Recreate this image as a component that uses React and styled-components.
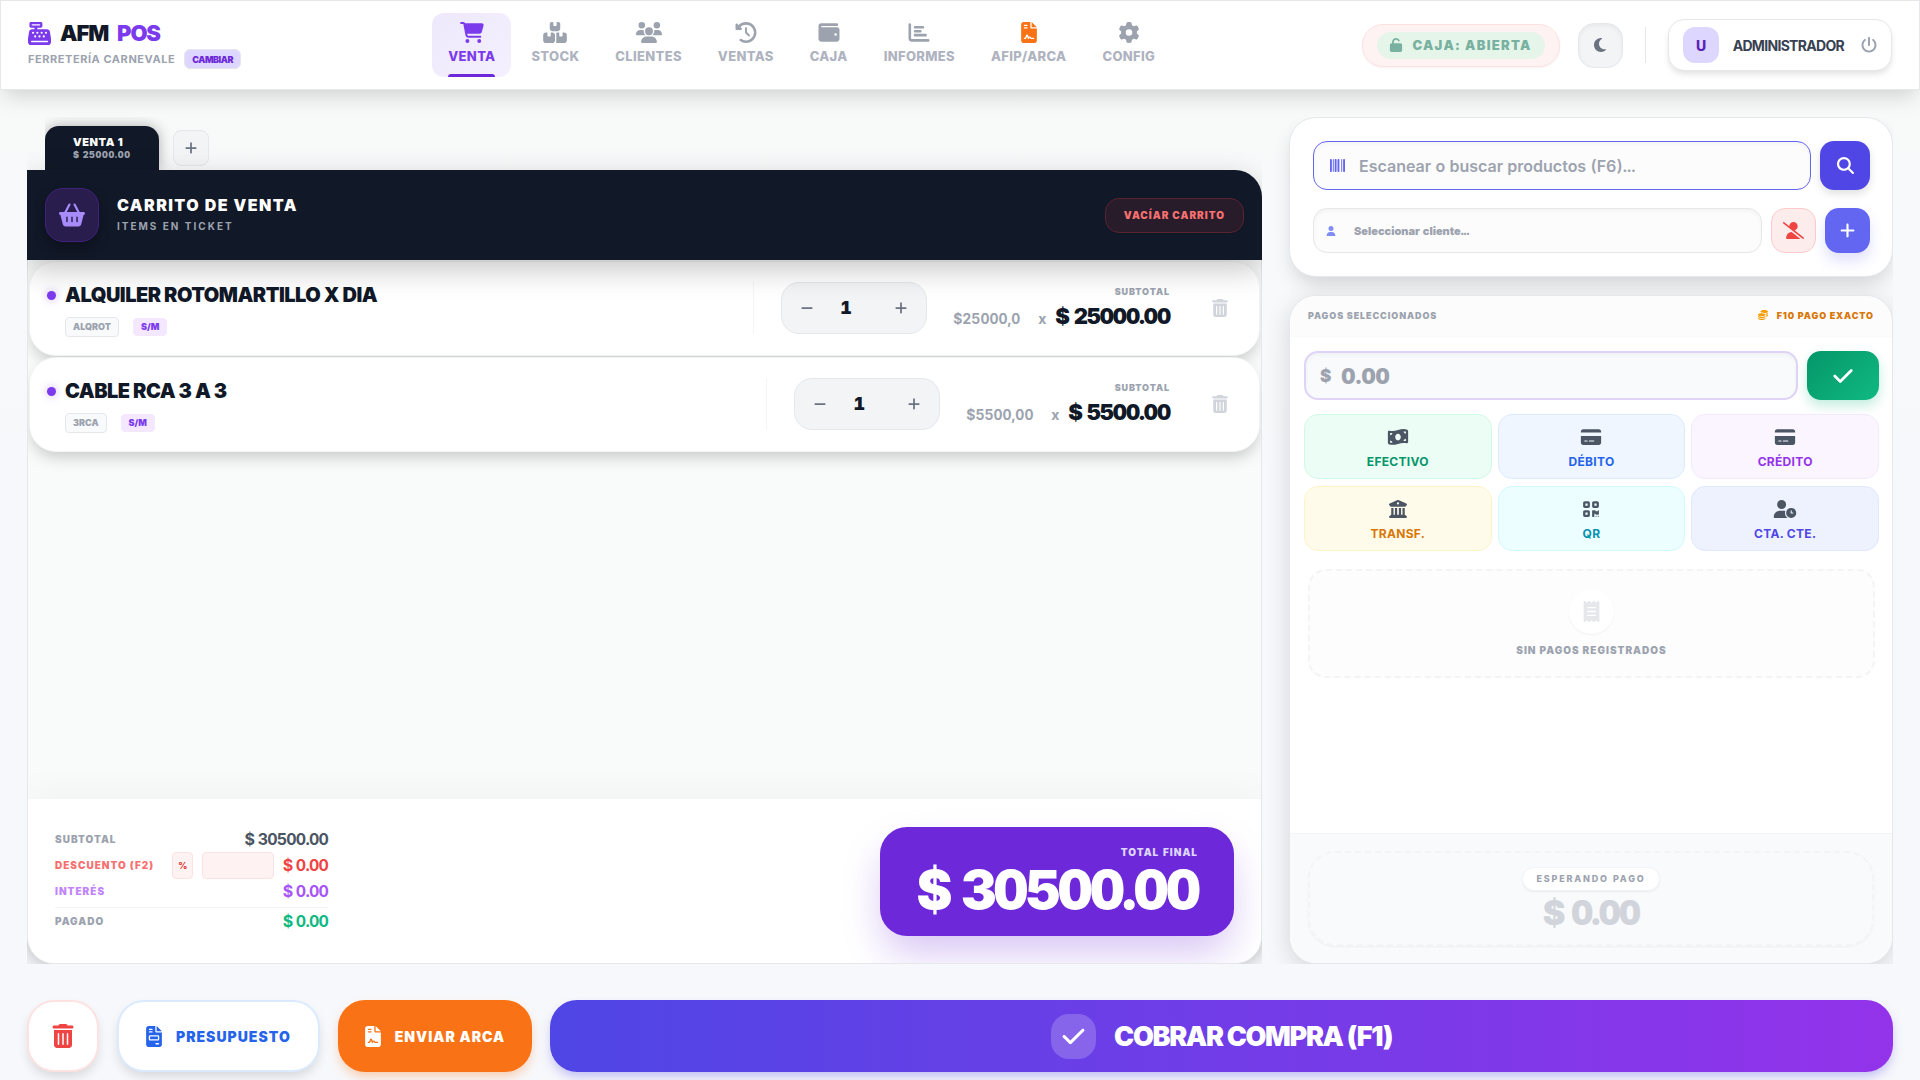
import styled, { createGlobalStyle } from "styled-components";
import { useState } from "react";
import {
  FaBarcode,
  FaBasketShopping,
  FaBoxesStacked,
  FaBuildingColumns,
  FaCartShopping,
  FaCashRegister,
  FaChartBar,
  FaCheck,
  FaClockRotateLeft,
  FaCoins,
  FaCreditCard,
  FaFileContract,
  FaFileInvoice,
  FaGear,
  FaMagnifyingGlass,
  FaMinus,
  FaMoneyBillWave,
  FaMoon,
  FaPlus,
  FaPowerOff,
  FaQrcode,
  FaReceipt,
  FaTrashCan,
  FaUnlock,
  FaUser,
  FaUserClock,
  FaUserSlash,
  FaUsers,
  FaWallet,
} from "react-icons/fa6";

const TIGHTER = "-0.05em";
const TIGHT = "-0.025em";
const WIDE = "0.05em";
const WIDEST = "0.1em";

const GlobalStyle = createGlobalStyle`
  *, *::before, *::after {
    box-sizing: border-box;
  }

  body {
    margin: 0;
    background: linear-gradient(180deg, #f8faf9 0%, #f7f8fb 45%, #f7f8fb 100%);
    font-family: Inter, "Liberation Sans", sans-serif;
    color: #111827;
  }

  button, input {
    font-family: inherit;
    margin: 0;
  }

  button {
    cursor: pointer;
    padding: 0;
    border: 0;
  }

  svg {
    display: block;
    flex-shrink: 0;
  }
`;

const Page = styled.div`
  display: flex;
  flex-direction: column;
  min-height: 100vh;
`;

const Header = styled.header`
  position: relative;
  display: flex;
  align-items: center;
  justify-content: space-between;
  height: 90px;
  padding: 0 27px;
  background-color: #ffffff;
  border: 1px solid #e5e7eb;
  box-shadow: 0 10px 20px -4px rgba(0, 0, 0, 0.16);
`;

const Brand = styled.div`
  display: flex;
  flex-direction: column;
  gap: 2px;
  padding-bottom: 2px;
`;

const BrandName = styled.h1`
  display: flex;
  align-items: center;
  gap: 9px;
  margin: 0;
  font-size: 22px;
  line-height: 28px;
  font-weight: 900;
  letter-spacing: ${TIGHTER};

  & svg {
    width: 23px;
    height: 23px;
    color: #7c3aed;
  }

  & span {
    color: #7c3aed;
  }
`;

const BrandShop = styled.div`
  display: flex;
  align-items: center;
  gap: 9px;
  font-size: 11px;
  font-weight: 700;
  letter-spacing: ${WIDE};
  color: #9ca3af;
`;

const ChangeButton = styled.button`
  height: 20px;
  padding: 0 7px;
  border: 1px solid #e5e7eb;
  border-radius: 6px;
  background-color: #ddd6fe;
  color: #6d28d9;
  font-size: 9px;
  font-weight: 900;
  letter-spacing: ${TIGHTER};
`;

const Nav = styled.nav`
  display: flex;
  gap: 4px;
`;

const NavLink = styled.a`
  position: relative;
  display: flex;
  flex-direction: column;
  align-items: center;
  gap: 3px;
  height: 64px;
  padding: 9px 16px 0;
  border-radius: 12px;
  font-size: 13px;
  line-height: 20px;
  font-weight: 800;
  letter-spacing: 0.025em;
  text-decoration: none;
  color: ${({ $active }) => ($active ? "#7c3aed" : "#aeb3bf")};
  background: ${({ $active }) =>
    $active ? "linear-gradient(135deg, #ede9fb, #f5f0fe)" : "transparent"};

  & svg {
    width: 28px;
    height: 21px;
    color: ${({ $active, $color }) =>
      $color || ($active ? "#7c3aed" : "#9ca3af")};
  }

  &::after {
    content: "";
    position: absolute;
    bottom: 0;
    left: 16px;
    right: 16px;
    height: 3px;
    border-radius: 3px 3px 0 0;
    background-color: ${({ $active }) => ($active ? "#6d28d9" : "transparent")};
  }
`;

const HeaderTools = styled.div`
  display: flex;
  align-items: center;
  justify-content: flex-end;
  gap: 18px;
`;

const CashState = styled.div`
  padding: 7px 14px;
  border: 1px solid #fee2e2;
  border-radius: 21px;
  background-color: #fef2f2;
  box-shadow: 0 1px 2px rgba(0, 0, 0, 0.05);
`;

const CashLabel = styled.div`
  display: flex;
  align-items: center;
  gap: 9px;
  height: 27px;
  padding: 0 13px 0 12px;
  border-radius: 14px;
  background-color: #e6f5ea;
  color: #78b19f;
  font-size: 13px;
  font-weight: 900;
  letter-spacing: ${WIDEST};
`;

const ThemeButton = styled.button`
  display: grid;
  place-items: center;
  width: 45px;
  height: 45px;
  border: 1px solid #e5e7eb;
  border-radius: 16px;
  background-color: #f3f4f6;
  color: #6b7280;
  box-shadow: inset 0 2px 4px rgba(0, 0, 0, 0.05);
`;

const Divider = styled.div`
  width: 1px;
  height: 36px;
  margin: 0 4px;
  background-color: #e5e7eb;
`;

const UserBox = styled.div`
  display: flex;
  align-items: center;
  gap: 14px;
  height: 52px;
  padding: 0 14px;
  border: 1px solid #e5e7eb;
  border-radius: 16px;
  background-color: #ffffff;
  box-shadow: 0 4px 6px -1px rgba(0, 0, 0, 0.12);
  font-size: 14px;
  font-weight: 700;
  letter-spacing: ${TIGHTER};
  color: #374151;

  & svg {
    margin-left: 3px;
  }
`;

const Avatar = styled.span`
  display: grid;
  place-items: center;
  width: 36px;
  height: 36px;
  border-radius: 12px;
  background-color: #ddd6fe;
  color: #5b21b6;
  font-weight: 800;
`;

const PlainButton = styled.button`
  display: grid;
  place-items: center;
  background: transparent;
  color: ${({ $color }) => $color || "#9ca3af"};
`;

const Main = styled.main`
  display: grid;
  grid-template-columns: minmax(0, 1235fr) minmax(0, 604fr);
  gap: 27px;
  flex: 1;
  padding: 27px 27px 0;
`;

const SaleColumn = styled.section`
  display: flex;
  flex-direction: column;
  overflow: hidden;
`;

const Tabs = styled.div`
  display: flex;
  align-items: flex-end;
  gap: 14px;
  height: 53px;
  margin-left: 18px;
  overflow: hidden;
`;

const SaleTab = styled.button`
  height: 44px;
  padding: 0 28px;
  border-radius: 14px 14px 0 0;
  background-color: #111827;
  box-shadow: 0 0 14px rgba(0, 0, 0, 0.3);
  color: #ffffff;
  text-align: left;
  font-size: 11px;
  line-height: 13px;
  font-weight: 900;
  letter-spacing: ${WIDE};

  & small {
    display: block;
    font-size: 9px;
    line-height: 12px;
    font-variant-numeric: tabular-nums;
    letter-spacing: 0.07em;
    color: #9ca3af;
  }
`;

const AddTab = styled.button`
  display: grid;
  place-items: center;
  width: 36px;
  height: 36px;
  margin-bottom: 4px;
  border: 1px solid #e5e7eb;
  border-radius: 8px;
  background-color: #f3f4f6;
  color: #6b7280;
`;

const Cart = styled.div`
  display: flex;
  flex-direction: column;
  flex: 1;
`;

const CartHeader = styled.div`
  position: relative;
  z-index: 1;
  display: flex;
  align-items: center;
  height: 90px;
  padding: 0 18px;
  border-radius: 0 27px 0 0;
  background-color: #111827;
  box-shadow: 0 10px 30px rgba(0, 0, 0, 0.22);
`;

const BasketBox = styled.div`
  display: grid;
  place-items: center;
  width: 54px;
  height: 54px;
  margin-right: 18px;
  border: 1px solid #42227f;
  border-radius: 18px;
  background-color: #281d4d;
  color: #a78bfa;
  box-shadow: 0 6px 12px rgba(0, 0, 0, 0.3);
`;

const CartTitle = styled.h2`
  margin: 0;
  font-size: 16px;
  line-height: 21px;
  font-weight: 900;
  letter-spacing: 0.09em;
  color: #ffffff;

  & small {
    display: block;
    font-size: 10px;
    line-height: 20px;
    font-weight: 700;
    letter-spacing: 0.2em;
    color: #9ca3af;
  }
`;

const EmptyButton = styled.button`
  height: 35px;
  margin-left: auto;
  padding: 0 18px;
  border: 1px solid #5a232f;
  border-radius: 14px;
  background-color: #281c2a;
  color: #f87171;
  font-size: 10px;
  font-weight: 900;
  letter-spacing: ${WIDEST};
`;

const CartBody = styled.div`
  display: flex;
  flex-direction: column;
  flex: 1;
  border: solid #e5e7eb;
  border-width: 0 1px 1px;
  border-radius: 0 0 27px 27px;
  overflow: hidden;
  box-shadow: 0 0 20px rgba(0, 0, 0, 0.3);
  background-color: #f9fafa;
`;

const Items = styled.div`
  display: flex;
  flex-direction: column;
  gap: 1px;
  flex: 1;
  min-height: 539px;
  padding: 1px;
`;

const Item = styled.article`
  display: flex;
  align-items: center;
  height: 95px;
  padding: 0 30px 2px 17px;
  border: 1px solid #f3f4f6;
  border-radius: 27px;
  background-color: #ffffff;
  box-shadow: 0 8px 16px -3px rgba(0, 0, 0, 0.2);
`;

const ItemInfo = styled.div`
  flex: 1;
  padding-top: 3px;
`;

const ItemName = styled.h3`
  display: flex;
  align-items: center;
  gap: 9px;
  margin: 0 0 8px;
  font-size: 20px;
  line-height: 28px;
  font-weight: 900;
  letter-spacing: ${TIGHT};

  &::before {
    content: "";
    width: 9px;
    height: 9px;
    border-radius: 50%;
    background-color: #7c3aed;
    box-shadow: 0 0 8px rgba(124, 58, 237, 0.4);
  }
`;

const Tags = styled.div`
  display: flex;
  align-items: center;
  gap: 14px;
  padding-left: 18px;
`;

const Tag = styled.span`
  padding: 0 7px;
  border: 1px solid ${({ $accent }) => ($accent ? "#f3e8ff" : "#e5e7eb")};
  border-radius: 4px;
  background-color: ${({ $accent }) => ($accent ? "#f3e8ff" : "#f9fafb")};
  color: ${({ $accent }) => ($accent ? "#7c3aed" : "#9ca3af")};
  font-size: 9px;
  line-height: ${({ $accent }) => ($accent ? 16 : 18)}px;
  font-weight: 900;
`;

const Quantity = styled.div`
  height: 52px;
  margin-right: 26px;
  padding-left: 27px;
  border-left: 1px solid #f3f4f6;
`;

const Stepper = styled.div`
  display: flex;
  align-items: center;
  width: 146px;
  height: 52px;
  border: 1px solid #e5e7eb;
  border-radius: 18px;
  background-color: #f3f4f6;

  & button {
    width: 50px;
    height: 50px;
  }
`;

const QtyInput = styled.input`
  width: 44px;
  padding: 0 16px 0 0;
  border: 0;
  outline: 0;
  background: transparent;
  text-align: center;
  font-size: 18px;
  font-weight: 900;
  font-variant-numeric: tabular-nums;
  color: #111827;
`;

const UnitPrice = styled.div`
  display: flex;
  align-items: center;
  margin-top: 21px;
  font-size: 14px;
  font-weight: 700;
  color: #9ca3af;

  & input {
    width: 85px;
    padding: 0;
    border: 0;
    outline: 0;
    background: transparent;
    font-size: 14px;
    font-weight: 700;
    font-variant-numeric: tabular-nums;
    color: #9ca3af;
  }
`;

const ItemTotal = styled.div`
  margin: 0 41px 0 9px;
  text-align: right;
  font-size: 22px;
  line-height: 32px;
  font-weight: 900;
  font-variant-numeric: tabular-nums;
  letter-spacing: ${TIGHTER};

  & small {
    display: block;
    font-size: 9px;
    line-height: 16px;
    font-weight: 900;
    letter-spacing: ${WIDEST};
    color: #9ca3af;
  }
`;

const Summary = styled.div`
  display: flex;
  align-items: center;
  justify-content: space-between;
  padding: 27px;
  background-color: #ffffff;
  box-shadow: 0 -10px 30px rgba(0, 0, 0, 0.03);
`;

const SummaryRows = styled.div`
  width: 273px;
  padding-bottom: 2px;
`;

const SummaryRow = styled.div`
  display: flex;
  align-items: center;
  height: 26px;
  color: ${({ $label }) => $label};
  font-size: 10px;
  font-weight: 900;
  letter-spacing: ${WIDEST};

  & output {
    margin-left: auto;
    font-size: 16px;
    font-weight: 700;
    font-variant-numeric: tabular-nums;
    letter-spacing: ${TIGHTER};
    color: ${({ $value }) => $value};
  }
`;

const PaidRow = styled(SummaryRow)`
  height: 27px;
  margin-top: 3px;
  border-top: 1px solid #f3f4f6;
`;

const PercentButton = styled.button`
  width: 21px;
  height: 27px;
  margin-left: 18px;
  border: 1px solid #fee2e2;
  border-radius: 4px;
  background-color: #fef2f2;
  color: #dc2626;
  font-size: 9px;
  font-weight: 700;
`;

const DiscountInput = styled.input`
  width: 72px;
  height: 27px;
  margin-left: 9px;
  border: 1px solid #fee2e2;
  border-radius: 4px;
  background-color: #fef2f2;
`;

const Total = styled.div`
  padding: 18px 36px 16px;
  border-radius: 27px;
  background-color: #6d28d9;
  box-shadow: 0 20px 40px -4px rgba(109, 40, 217, 0.28);
  color: #ffffff;
  text-align: right;
  font-size: 54px;
  line-height: 60px;
  font-weight: 900;
  font-variant-numeric: tabular-nums;
  letter-spacing: ${TIGHTER};

  & small {
    display: block;
    font-size: 10px;
    line-height: 15px;
    font-weight: 900;
    letter-spacing: ${WIDEST};
    color: #ddd6fe;
  }
`;

const SideColumn = styled.aside`
  display: flex;
  flex-direction: column;
  gap: 18px;
  margin-left: -27px;
  padding-left: 27px;
  overflow: hidden;
`;

const Panel = styled.section`
  border: 1px solid #e5e7eb;
  border-radius: 27px;
  background-color: #ffffff;
  box-shadow: 0 10px 20px -4px rgba(0, 0, 0, 0.16);
`;

const SearchPanel = styled(Panel)`
  display: flex;
  flex-direction: column;
  gap: 18px;
  padding: 23px 22px 23px 23px;
`;

const FieldRow = styled.div`
  display: flex;
  gap: 9px;
`;

const Field = styled.label`
  display: flex;
  align-items: center;
  flex: 1;
  gap: ${({ $gap }) => $gap}px;
  height: ${({ $height }) => $height}px;
  padding: 0 ${({ $pad }) => $pad}px;
  border: ${({ $border }) => $border};
  border-radius: 14px;
  background-color: ${({ $bg }) => $bg || "#fcfcfc"};
  box-shadow: inset 0 2px 4px rgba(0, 0, 0, 0.04);
  color: ${({ $color }) => $color};
  font-size: 17px;
  font-weight: 900;

  & input {
    flex: 1;
    min-width: 0;
    padding: 0;
    border: 0;
    outline: 0;
    background: transparent;
    font-size: ${({ $size }) => $size}px;
    font-weight: ${({ $weight }) => $weight};
    font-variant-numeric: tabular-nums;
    color: #111827;
  }

  & input::placeholder {
    color: #9ca3af;
    opacity: 1;
  }
`;

const SquareButton = styled.button`
  display: grid;
  place-items: center;
  width: ${({ $width }) => $width}px;
  border: ${({ $border }) => $border || "0"};
  border-radius: 14px;
  background: ${({ $bg }) => $bg};
  color: ${({ $color }) => $color || "#ffffff"};
  box-shadow: ${({ $shadow }) => $shadow || "none"};
`;

const PayPanel = styled(Panel)`
  display: flex;
  flex-direction: column;
  flex: 1;
  overflow: hidden;
  box-shadow: 0 6px 24px rgba(0, 0, 0, 0.14);
`;

const PayHeader = styled.div`
  display: flex;
  align-items: center;
  justify-content: space-between;
  height: 41px;
  padding: 0 18px 2px;
  border-bottom: 1px solid #f9fafb;
  background-color: #fcfcfc;
  font-size: 9px;
  font-weight: 900;
  letter-spacing: ${WIDEST};
  color: #9ca3af;
`;

const ExactButton = styled.button`
  display: flex;
  align-items: center;
  gap: 9px;
  background: transparent;
  color: #d97706;
  font-size: 9px;
  font-weight: 900;
  letter-spacing: ${WIDEST};

  & svg {
    color: #f59e0b;
  }
`;

const PayBody = styled.div`
  display: flex;
  flex-direction: column;
  flex: 1;
  gap: 14px;
  padding: 14px 13px 14px 14px;
`;

const Methods = styled.div`
  display: grid;
  grid-template-columns: repeat(3, 1fr);
  gap: 7px 6px;
`;

const Method = styled.button`
  display: flex;
  flex-direction: column;
  align-items: center;
  justify-content: center;
  gap: 8px;
  height: 65px;
  padding-top: 4px;
  border: 1px solid ${({ $border }) => $border};
  border-radius: 14px;
  background-color: ${({ $bg }) => $bg};
  color: ${({ $color }) => $color};
  font-size: 12px;
  line-height: 16px;
  font-weight: 700;
  letter-spacing: 0.025em;

  & svg {
    width: 24px;
    height: 18px;
    color: #4b5563;
  }
`;

const NoPayments = styled.div`
  display: flex;
  flex-direction: column;
  align-items: center;
  justify-content: center;
  gap: 10px;
  height: 109px;
  margin: 4px;
  padding-bottom: 2px;
  border: 2px dashed #f3f4f6;
  border-radius: 18px;
  background-color: #fdfdfd;
  color: #9ca3af;
  font-size: 10px;
  font-weight: 900;
  letter-spacing: ${WIDEST};
`;

const ReceiptCircle = styled.span`
  display: grid;
  place-items: center;
  width: 45px;
  height: 45px;
  border-radius: 50%;
  background-color: #ffffff;
  box-shadow: 0 1px 2px rgba(0, 0, 0, 0.05);
  color: #e5e7eb;
`;

const PayFooter = styled.div`
  padding: 17px 18px;
  border-top: 1px solid #f3f4f6;
  background-color: #f9fafb;
`;

const Waiting = styled.div`
  display: flex;
  flex-direction: column;
  align-items: center;
  height: 95px;
  padding-top: 14px;
  border: 2px dashed #f3f4f6;
  border-radius: 27px;
  box-shadow: 0 1px 2px rgba(0, 0, 0, 0.05);
  font-size: 34px;
  line-height: 44px;
  font-weight: 900;
  font-variant-numeric: tabular-nums;
  letter-spacing: ${TIGHTER};
  color: #d1d5db;

  & small {
    padding: 0 14px;
    border: 1px solid #f3f4f6;
    border-radius: 12px;
    background-color: #ffffff;
    box-shadow: 0 1px 2px rgba(0, 0, 0, 0.06);
    font-size: 9px;
    line-height: 22px;
    font-weight: 800;
    letter-spacing: 0.2em;
    color: #9ca3af;
  }
`;

const Actions = styled.footer`
  display: flex;
  gap: 18px;
  padding: 36px 27px 9px;
`;

const ActionButton = styled.button`
  display: flex;
  align-items: center;
  justify-content: center;
  gap: 14px;
  height: 72px;
  padding: 0 ${({ $pad }) => $pad}px;
  border: ${({ $border }) => $border || "0"};
  border-radius: 27px;
  background-color: ${({ $bg }) => $bg || "#ffffff"};
  box-shadow: 0 6px 12px -2px ${({ $glow }) => $glow || "rgba(0, 0, 0, 0.14)"};
  color: ${({ $color }) => $color};
  font-size: 14px;
  font-weight: 900;
  letter-spacing: 1px;

  & > svg {
    width: ${({ $icon }) => $icon || 16}px;
    height: ${({ $icon }) => ($icon ? 24 : 21)}px;
  }
`;

const ChargeButton = styled(ActionButton)`
  flex: 1;
  gap: 18px;
  background: linear-gradient(90deg, #4f46e5, #9333ea);
  color: #ffffff;
  font-size: 27px;
  font-weight: 900;
  letter-spacing: ${TIGHTER};
`;

const CheckBox = styled.span`
  display: grid;
  place-items: center;
  width: 45px;
  height: 45px;
  border-radius: 18px;
  background-color: rgba(255, 255, 255, 0.2);
`;

const NAV = [
  { label: "VENTA", icon: FaCartShopping, active: true },
  { label: "STOCK", icon: FaBoxesStacked },
  { label: "CLIENTES", icon: FaUsers },
  { label: "VENTAS", icon: FaClockRotateLeft },
  { label: "CAJA", icon: FaWallet },
  { label: "INFORMES", icon: FaChartBar },
  { label: "AFIP/ARCA", icon: FaFileContract, color: "#f97316" },
  { label: "CONFIG", icon: FaGear },
];

const ITEMS = [
  {
    name: "ALQUILER ROTOMARTILLO X DIA",
    code: "ALQROT",
    unit: "$25000,0",
    total: "$ 25000.00",
  },
  { name: "CABLE RCA 3 A 3", code: "3RCA", unit: "$5500,00", total: "$ 5500.00" },
];

const METHODS = [
  { label: "EFECTIVO", icon: FaMoneyBillWave, bg: "#ecfdf5", border: "#d1fae5", color: "#059669" },
  { label: "DÉBITO", icon: FaCreditCard, bg: "#eff6ff", border: "#dbeafe", color: "#2563eb" },
  { label: "CRÉDITO", icon: FaCreditCard, bg: "#faf5ff", border: "#f3e8ff", color: "#9333ea" },
  { label: "TRANSF.", icon: FaBuildingColumns, bg: "#fffbeb", border: "#fef3c7", color: "#d97706" },
  { label: "QR", icon: FaQrcode, bg: "#ecfeff", border: "#cffafe", color: "#0891b2" },
  { label: "CTA. CTE.", icon: FaUserClock, bg: "#eef2ff", border: "#e0e7ff", color: "#4f46e5" },
];

function CartItem({ item }) {
  const [qty, setQty] = useState(1);
  const [unit, setUnit] = useState(item.unit);
  return (
    <Item>
      <ItemInfo>
        <ItemName>{item.name}</ItemName>
        <Tags>
          <Tag>{item.code}</Tag>
          <Tag $accent>S/M</Tag>
        </Tags>
      </ItemInfo>
      <Quantity>
        <Stepper>
          <PlainButton
            $color="#6b7280"
            aria-label="Restar"
            onClick={() => setQty(Math.max(1, Number(qty) - 1))}
          >
            <FaMinus size={14} />
          </PlainButton>
          <QtyInput
            aria-label="Cantidad"
            value={qty}
            onChange={(e) => setQty(e.target.value)}
          />
          <PlainButton
            $color="#6b7280"
            aria-label="Sumar"
            onClick={() => setQty(Number(qty) + 1)}
          >
            <FaPlus size={14} />
          </PlainButton>
        </Stepper>
      </Quantity>
      <UnitPrice>
        <input
          aria-label="Precio unitario"
          value={unit}
          onChange={(e) => setUnit(e.target.value)}
        />
        x
      </UnitPrice>
      <ItemTotal>
        <small>SUBTOTAL</small>
        {item.total}
      </ItemTotal>
      <PlainButton $color="#d1d5db" aria-label="Quitar">
        <FaTrashCan size={18} />
      </PlainButton>
    </Item>
  );
}

function App() {
  return (
    <Page>
      <GlobalStyle />
      <Header>
        <Brand>
          <BrandName>
            <FaCashRegister />
            AFM <span>POS</span>
          </BrandName>
          <BrandShop>
            FERRETERÍA CARNEVALE
            <ChangeButton>CAMBIAR</ChangeButton>
          </BrandShop>
        </Brand>
        <Nav>
          {NAV.map(({ label, icon: Icon, active, color }) => (
            <NavLink key={label} href="#" $active={active} $color={color}>
              <Icon />
              {label}
            </NavLink>
          ))}
        </Nav>
        <HeaderTools>
          <CashState>
            <CashLabel>
              <FaUnlock size={14} />
              CAJA: ABIERTA
            </CashLabel>
          </CashState>
          <ThemeButton aria-label="Tema">
            <FaMoon size={16} />
          </ThemeButton>
          <Divider />
          <UserBox>
            <Avatar>U</Avatar>
            ADMINISTRADOR
            <PlainButton aria-label="Salir">
              <FaPowerOff size={16} />
            </PlainButton>
          </UserBox>
        </HeaderTools>
      </Header>

      <Main>
        <SaleColumn>
          <Tabs>
            <SaleTab>
              VENTA 1<small>$ 25000.00</small>
            </SaleTab>
            <AddTab aria-label="Nueva venta">
              <FaPlus size={14} />
            </AddTab>
          </Tabs>
          <Cart>
            <CartHeader>
              <BasketBox>
                <FaBasketShopping size={26} />
              </BasketBox>
              <CartTitle>
                CARRITO DE VENTA
                <small>ITEMS EN TICKET</small>
              </CartTitle>
              <EmptyButton>VACÍAR CARRITO</EmptyButton>
            </CartHeader>
            <CartBody>
              <Items>
                {ITEMS.map((item) => (
                  <CartItem key={item.code} item={item} />
                ))}
              </Items>
              <Summary>
                <SummaryRows>
                  <SummaryRow $label="#9ca3af" $value="#4b5563">
                    SUBTOTAL
                    <output>$ 30500.00</output>
                  </SummaryRow>
                  <SummaryRow $label="#f87171" $value="#ef4444">
                    <label htmlFor="discount">DESCUENTO (F2)</label>
                    <PercentButton>%</PercentButton>
                    <DiscountInput id="discount" />
                    <output>$ 0.00</output>
                  </SummaryRow>
                  <SummaryRow $label="#c084fc" $value="#a855f7">
                    INTERÉS
                    <output>$ 0.00</output>
                  </SummaryRow>
                  <PaidRow $label="#9ca3af" $value="#10b981">
                    PAGADO
                    <output>$ 0.00</output>
                  </PaidRow>
                </SummaryRows>
                <Total>
                  <small>TOTAL FINAL</small>$ 30500.00
                </Total>
              </Summary>
            </CartBody>
          </Cart>
        </SaleColumn>

        <SideColumn>
          <SearchPanel>
            <FieldRow>
              <Field
                $height={49}
                $pad={16}
                $gap={14}
                $border="1px solid #6366f1"
                $color="#6366f1"
                $size={16}
                $weight={600}
              >
                <FaBarcode size={15} />
                <input
                  autoFocus
                  aria-label="Buscar productos"
                  placeholder="Escanear o buscar productos (F6)..."
                />
              </Field>
              <SquareButton
                $width={50}
                $bg="#4f46e5"
                $shadow="0 4px 8px rgba(0, 0, 0, 0.12)"
                aria-label="Buscar"
              >
                <FaMagnifyingGlass size={17} />
              </SquareButton>
            </FieldRow>
            <FieldRow>
              <Field
                $height={45}
                $pad={12}
                $gap={18}
                $border="1px solid #e5e7eb"
                $color="#818cf8"
                $size={11}
                $weight={900}
              >
                <FaUser size={10} />
                <input aria-label="Cliente" placeholder="Seleccionar cliente..." />
              </Field>
              <SquareButton
                $width={45}
                $bg="#fdecec"
                $border="1px solid #fecaca"
                $color="#ef4444"
                aria-label="Quitar cliente"
              >
                <FaUserSlash size={21} />
              </SquareButton>
              <SquareButton
                $width={45}
                $bg="#6366f1"
                $shadow="0 8px 14px rgba(99, 102, 241, 0.2)"
                aria-label="Nuevo cliente"
              >
                <FaPlus size={17} />
              </SquareButton>
            </FieldRow>
          </SearchPanel>

          <PayPanel>
            <PayHeader>
              PAGOS SELECCIONADOS
              <ExactButton>
                <FaCoins size={10} />
                F10 PAGO EXACTO
              </ExactButton>
            </PayHeader>
            <PayBody>
              <FieldRow>
                <Field
                  $height={49}
                  $pad={14}
                  $gap={10}
                  $border="2px solid #dfd3f8"
                  $color="#9ca3af"
                  $bg="#f9fafb"
                  $size={22}
                  $weight={900}
                >
                  $
                  <input aria-label="Monto" placeholder="0.00" />
                </Field>
                <SquareButton
                  $width={72}
                  $bg="linear-gradient(135deg, #059669, #10b981)"
                  $shadow="0 6px 12px rgba(16, 185, 129, 0.25)"
                  aria-label="Agregar pago"
                >
                  <FaCheck size={22} />
                </SquareButton>
              </FieldRow>
              <Methods>
                {METHODS.map(({ label, icon: Icon, bg, border, color }) => (
                  <Method key={label} $bg={bg} $border={border} $color={color}>
                    <Icon />
                    {label}
                  </Method>
                ))}
              </Methods>
              <NoPayments>
                <ReceiptCircle>
                  <FaReceipt size={21} />
                </ReceiptCircle>
                SIN PAGOS REGISTRADOS
              </NoPayments>
            </PayBody>
            <PayFooter>
              <Waiting>
                <small>ESPERANDO PAGO</small>$ 0.00
              </Waiting>
            </PayFooter>
          </PayPanel>
        </SideColumn>
      </Main>

      <Actions>
        <ActionButton
          $pad={23}
          $border="2px solid #fee2e2"
          $color="#ef4444"
          $icon={22}
          aria-label="Eliminar venta"
        >
          <FaTrashCan />
        </ActionButton>
        <ActionButton $pad={27} $border="2px solid #dbeafe" $color="#2563eb">
          <FaFileInvoice />
          PRESUPUESTO
        </ActionButton>
        <ActionButton
          $pad={27}
          $bg="#f97316"
          $color="#ffffff"
          $glow="rgba(249, 115, 22, 0.35)"
        >
          <FaFileContract />
          ENVIAR ARCA
        </ActionButton>
        <ChargeButton $pad={27} $glow="rgba(79, 70, 229, 0.35)">
          <CheckBox>
            <FaCheck size={25} />
          </CheckBox>
          COBRAR COMPRA (F1)
        </ChargeButton>
      </Actions>
    </Page>
  );
}

export default App;
